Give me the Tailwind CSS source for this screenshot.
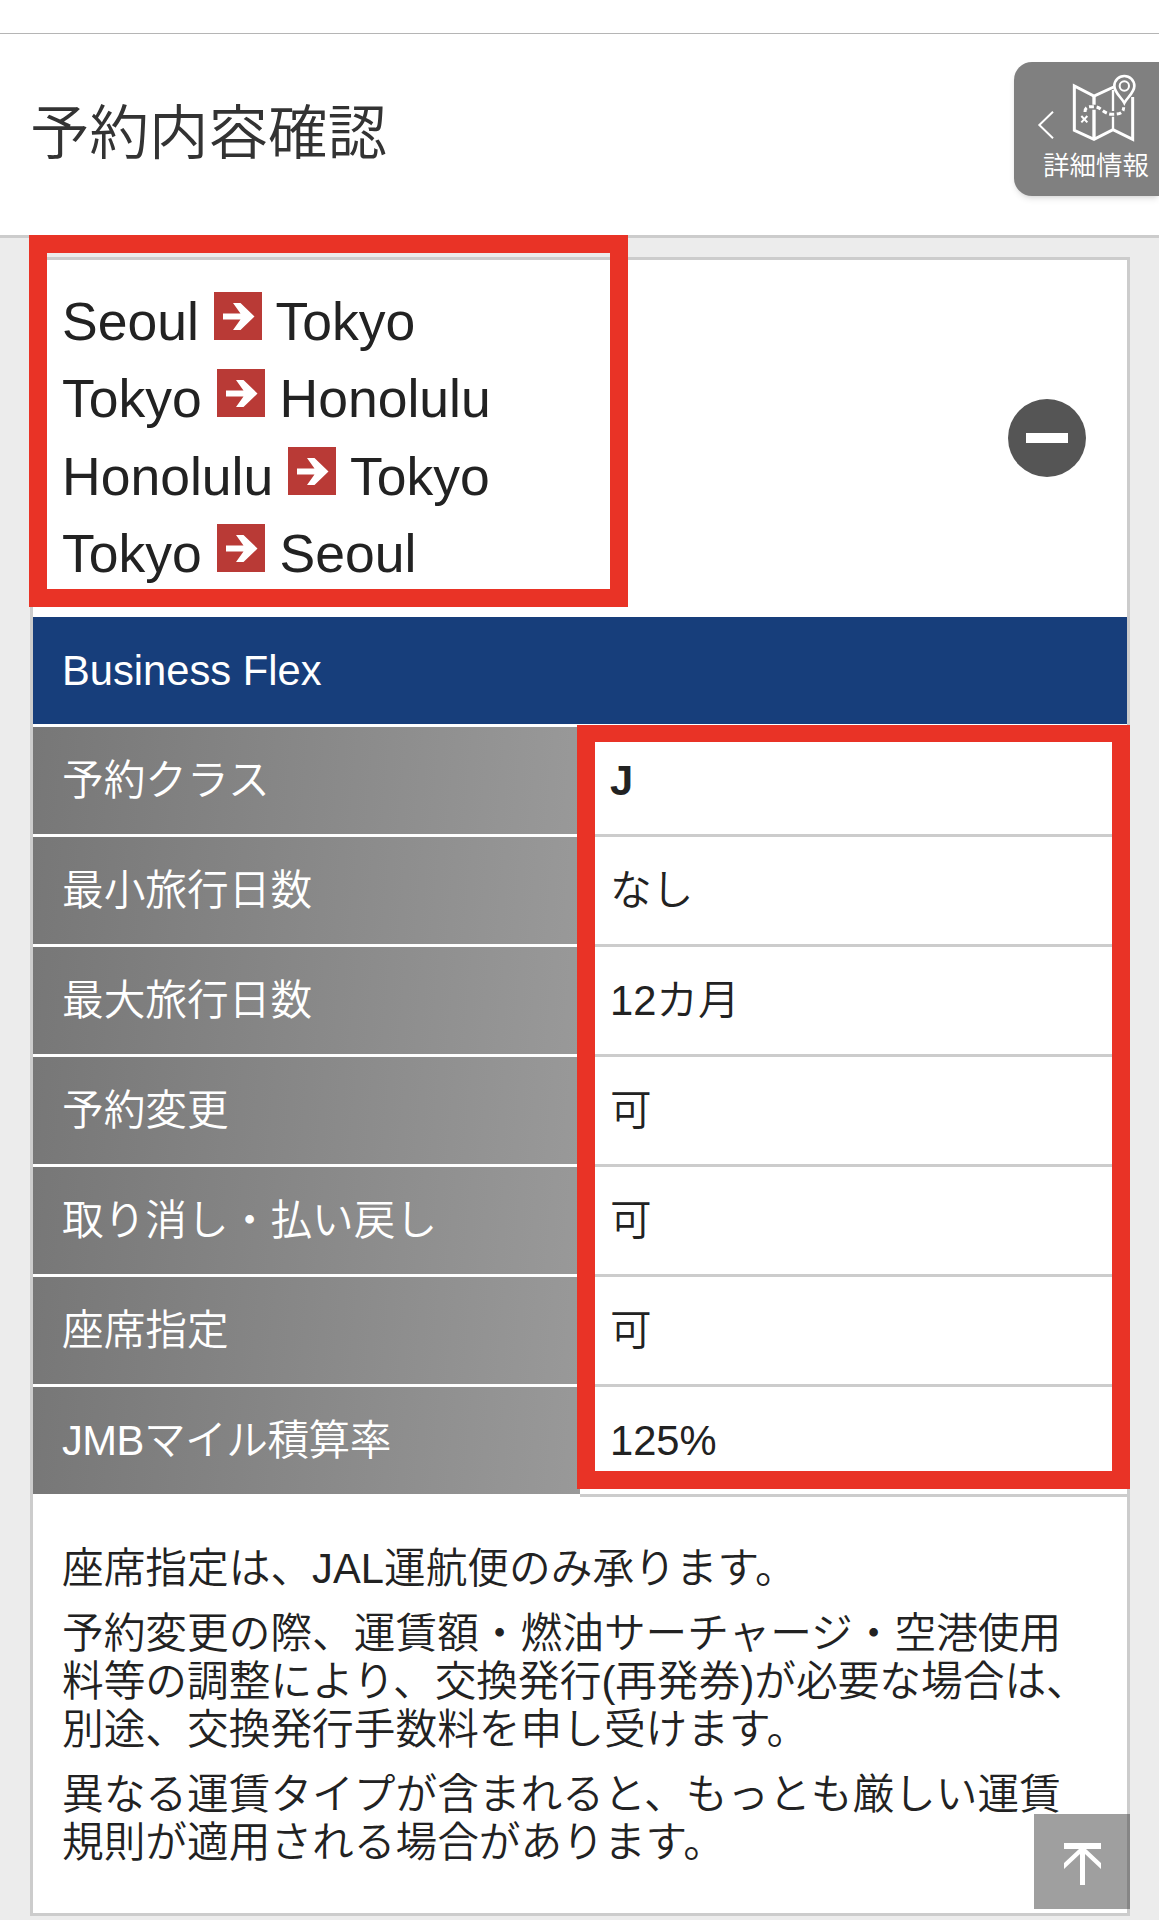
<!DOCTYPE html>
<html lang="ja">
<head>
    <meta charset="UTF-8">
    <meta name="viewport" content="width=device-width, initial-scale=1.0">
    <title>予約内容確認</title>
    <script src="https://cdn.jsdelivr.net/npm/@tailwindcss/browser@4"></script>
</head>
<body class="relative h-[1920px] overflow-hidden bg-[#ececec] font-['Liberation_Sans','Noto_Sans_CJK_JP',sans-serif] font-[350] text-[#222]">
    <svg class="hidden">
      <symbol id="arrow" viewBox="0 0 48 48">
        <rect width="48" height="48" fill="#b93a36"/>
        <path d="M9 21.500H26.500L19 11H26.500L40.500 24.500L26.500 38H19L26.500 27.500H9Z" fill="#fff"/>
      </symbol>
    </svg>

    <header class="flex h-[238px] flex-col border-b-[3px] border-[#ccc] bg-white">
        <div class="h-[34px] shrink-0 border-b border-[#b5b5b5]"></div>
        <div class="flex flex-1 items-start justify-between pl-[30px]">
            <h1 class="mt-[70px] text-[59.5px] leading-[60px] text-[#333]">予約内容確認</h1>
            <div class="relative mt-7 h-[134px] w-[145px] rounded-l-[18px] bg-[#808080] text-white shadow-md">
                <svg class="h-[134px] w-[145px]" viewBox="105 66 435 402" fill="none" stroke="#fff">
                    <path d="M222 215L181 255L222 295" stroke-width="6"/>
                    <path d="M404 141L345 168L286 138V271L345 298L402 269L461 298V171" stroke-width="9"/>
                    <path d="M345 168V194M345 209V298" stroke-width="10"/>
                    <path d="M402 150V213M402 230V269" stroke-width="7"/>
                    <path d="M436 189C428 173 406 158 406 138A30 30 0 0 1 466 138C466 158 444 173 436 189Z" stroke-width="8"/>
                    <circle cx="436" cy="138" r="14" stroke-width="6"/>
                    <path d="M318 216Q318 200 334 200H346C366 200 374 223 400 223C423 223 434 218 434 202" stroke-width="9" stroke-dasharray="14 8"/>
                    <path d="M307 228L325 247M325 228L307 247" stroke-width="6"/>
                </svg>
                <span class="absolute left-[29px] top-[91px] text-[26.5px] leading-[27px] whitespace-nowrap">詳細情報</span>
            </div>
        </div>
    </header>

    <main class="mt-[19px] ml-[30px] h-[1659px] w-[1100px] border-[3px] border-[#ccc] bg-white text-[41.7px]">
        <div class="flex h-[357px] items-start justify-between pr-[41px] pl-[29px]">
            <div class="pt-[23px] text-[53.5px] leading-[77.3px]">
                <p>Seoul <svg class="inline h-12 w-12 align-baseline"><use href="#arrow"/></svg> Tokyo</p>
                <p>Tokyo <svg class="inline h-12 w-12 align-baseline"><use href="#arrow"/></svg> Honolulu</p>
                <p>Honolulu <svg class="inline h-12 w-12 align-baseline"><use href="#arrow"/></svg> Tokyo</p>
                <p>Tokyo <svg class="inline h-12 w-12 align-baseline"><use href="#arrow"/></svg> Seoul</p>
            </div>
            <div class="mt-[139px] flex h-[78px] w-[78px] items-center justify-center rounded-full bg-[#555]">
                <div class="h-[10px] w-[42px] bg-white"></div>
            </div>
        </div>

        <h2 class="h-[107px] bg-[#173e7b] pl-[29px] leading-[107px] text-white">Business Flex</h2>

        <dl class="mt-[3px] grid auto-rows-[110px] grid-cols-[547px_1fr] leading-[107px] [&>dd]:border-b-[3px] [&>dd]:border-[#ccc] [&>dd]:pl-[30px] [&>dt]:border-b-[3px] [&>dt]:border-white [&>dt]:bg-linear-[95deg] [&>dt]:from-[#777] [&>dt]:to-[#999] [&>dt]:bg-origin-border [&>dt]:pl-[29px] [&>dt]:text-white">
            <dt>予約クラス</dt>
            <dd class="font-bold">J</dd>
            <dt>最小旅行日数</dt>
            <dd>なし</dd>
            <dt>最大旅行日数</dt>
            <dd>12カ月</dd>
            <dt>予約変更</dt>
            <dd>可</dd>
            <dt>取り消し・払い戻し</dt>
            <dd>可</dd>
            <dt>座席指定</dt>
            <dd>可</dd>
            <dt class="tracking-[-0.5px]">JMBマイル積算率</dt>
            <dd>125%</dd>
        </dl>

        <div class="space-y-[17px] pt-12 pl-[29px] leading-[48px] whitespace-nowrap">
            <p>座席指定は、JAL運航便のみ承ります。</p>
            <p>予約変更の際、運賃額・燃油サーチャージ・空港使用<br>料等の調整により、交換発行(再発券)が必要な場合は、<br>別途、交換発行手数料を申し受けます。</p>
            <p>異なる運賃タイプが含まれると、もっとも厳しい運賃<br>規則が適用される場合があります。</p>
        </div>
    </main>

    <!-- highlight frames -->
    <div class="absolute top-[235px] left-[29px] h-[372px] w-[599px] border-[18px] border-[#e93326]"></div>
    <div class="absolute top-[725px] left-[577px] h-[764px] w-[553px] border-[18px] border-t-[17px] border-[#e93326]"></div>

    <!-- back to top -->
    <a class="absolute top-[1814px] left-[1034px] h-[95px] w-[96px] bg-[#404040]/50">
        <svg class="h-[95px] w-[96px]" viewBox="0 0 96 95" fill="#fff">
            <path d="M30 29H67V35H52L67 49V55L51 40V71H46V40L30 55V49L45 35H30Z"/>
        </svg>
    </a>
</body>
</html>
